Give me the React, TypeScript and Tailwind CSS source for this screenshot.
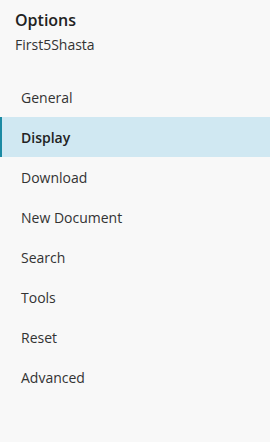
import React from 'react';

const items = ['General', 'Display', 'Download', 'New Document', 'Search', 'Tools', 'Reset', 'Advanced'];

const App = () => {
  const active = 'Display';
  return (
    <div className="w-[270px] h-[442px] bg-[#f8f8f8] text-[#333] font-['Open_Sans',sans-serif]">
      <div className="px-[15px] pt-[10px]">
        <h1 className="text-[16px] font-semibold leading-[20px] text-[#222]">Options</h1>
        <p className="text-[14px] leading-[18px] mt-[6px] text-[#333]">First5Shasta</p>
      </div>
      <nav className="mt-[23px] flex flex-col">
        {items.map((item) => (
          <div
            key={item}
            className={
              item === active
                ? 'h-[40px] flex items-center pl-[19px] border-l-2 border-[#1b8aa3] bg-[#d0e8f2] text-[14px] font-semibold text-[#222]'
                : 'h-[40px] flex items-center pl-[21px] text-[14px] text-[#333]'
            }
          >
            {item}
          </div>
        ))}
      </nav>
    </div>
  );
};

export default App;
